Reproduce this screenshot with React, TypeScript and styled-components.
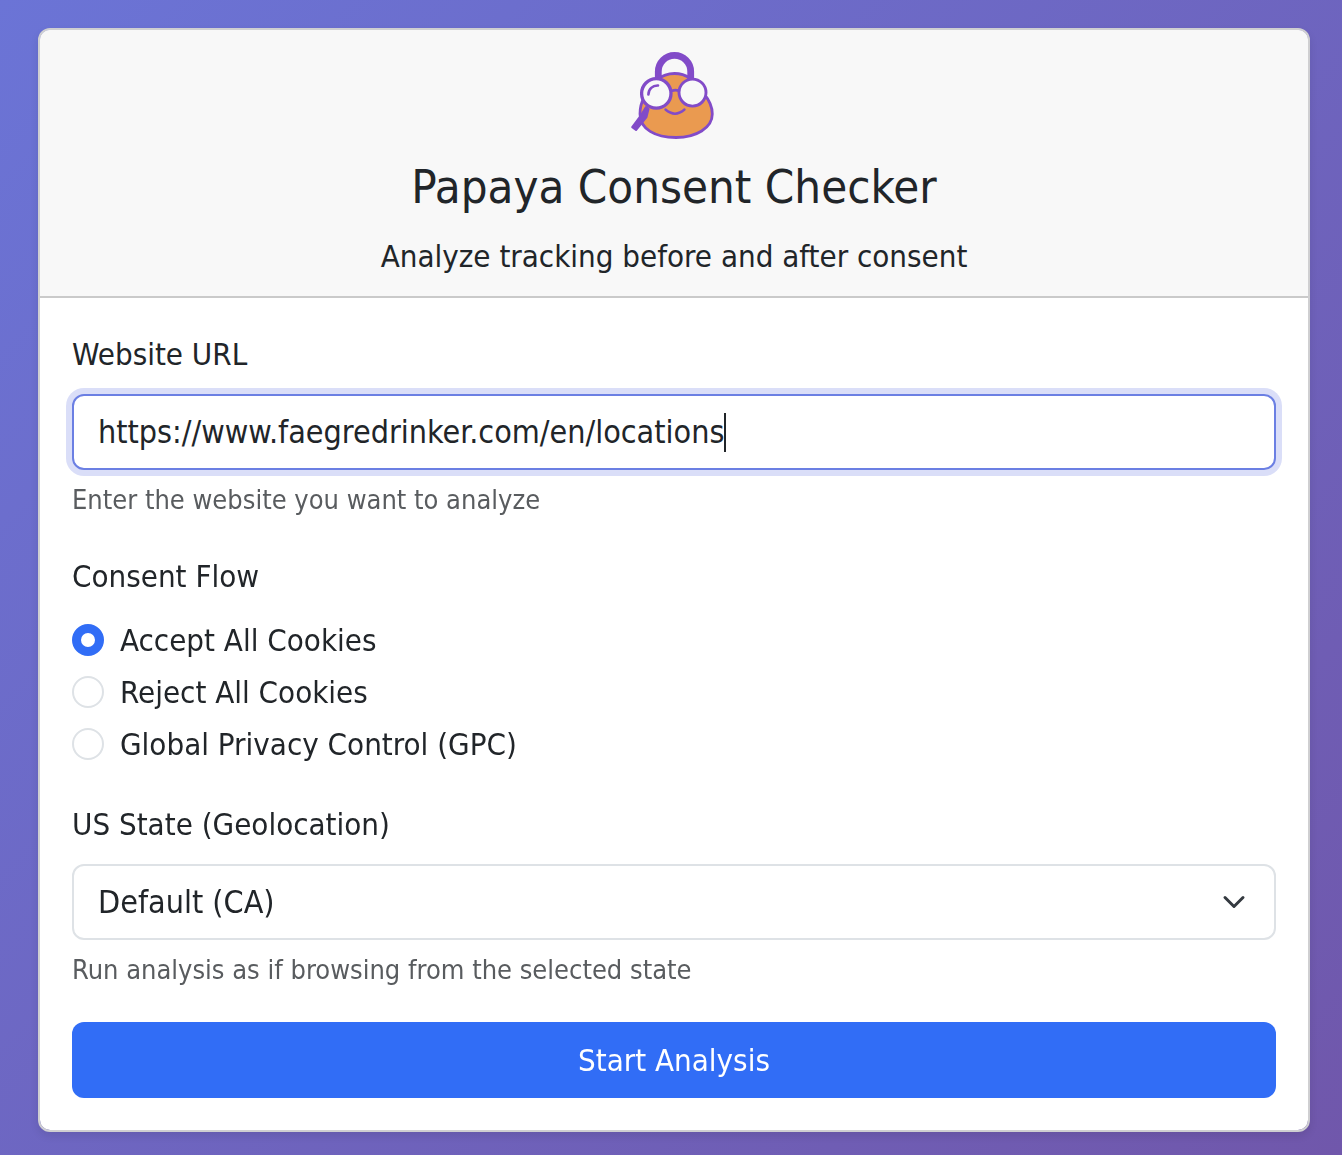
import React, { useState } from 'react';
import styled, { createGlobalStyle } from 'styled-components';

const GlobalStyle = createGlobalStyle`
  *, *::before, *::after { box-sizing: border-box; }
  body {
    margin: 0;
    color: #212529;
    background: #6d65c2;
    font-family: Tahoma, 'DejaVu Sans Condensed', 'Noto Sans', sans-serif;
    font-size: 31px;
    line-height: 48px;
  }
  button, input, select { font: inherit; color: inherit; margin: 0; }
`;

const Page = styled.main`
  min-height: 100vh;
  padding: 28px 32px 23px 38px;
  background: linear-gradient(135deg, #6b74d6 0%, #7057ab 100%);
`;

const Card = styled.section`
  border: 2px solid #cfcfd1;
  border-radius: 12px;
  background: #fff;
  background-clip: padding-box;
  box-shadow: 0 4px 8px rgba(0, 0, 0, 0.09);
  overflow: hidden;
`;

const Header = styled.header`
  display: flex;
  flex-direction: column;
  align-items: center;
  gap: 16px;
  padding: 16px 32px;
  text-align: center;
  background: #f8f8f8;
  border-bottom: 2px solid #cacaca;
`;

const Title = styled.h1`
  margin: 0;
  font-size: 47px;
  font-weight: 400;
  line-height: 58px;
`;

const Subtitle = styled.p`
  margin: 0;
`;

const Form = styled.form`
  display: flex;
  flex-direction: column;
  gap: 32px;
  padding: 32px;
`;

const Field = styled.div`
  display: flex;
  flex-direction: column;
`;

const Group = styled.fieldset`
  display: flex;
  flex-direction: column;
  gap: 4px;
  min-width: 0;
  margin: 0;
  padding: 0;
  border: 0;
`;

const Label = styled.label`
  margin-bottom: 16px;
`;

const Legend = styled.legend`
  padding: 0;
  margin-bottom: 16px;
`;

const Hint = styled.small`
  margin-top: 10px;
  color: #595c5f;
  font-size: 27px;
  line-height: 40px;
`;

const InputShell = styled.label`
  display: flex;
  align-items: center;
  height: 76px;
  padding: 0 24px;
  border: 2px solid #6b7fe3;
  border-radius: 12px;
  background: #fff;
  box-shadow: 0 0 0 6px #dadef8;
  cursor: text;
`;

const UrlInput = styled.input`
  field-sizing: content;
  max-width: 100%;
  height: 48px;
  padding: 0;
  border: 0;
  outline: 0;
  background: transparent;
  caret-color: transparent;
  font-size: 32px;
`;

const Caret = styled.span`
  width: 2px;
  height: 39px;
  background: #212529;
`;

const RadioRow = styled.label`
  display: flex;
  align-items: center;
  gap: 16px;
`;

const Radio = styled.input`
  appearance: none;
  flex: none;
  width: 32px;
  height: 32px;
  border: 2px solid #dee2e6;
  border-radius: 50%;
  background: #fff;

  &:checked {
    border: 9px solid #316df6;
  }
`;

const SelectShell = styled.div`
  display: grid;
  align-items: center;

  & > * { grid-area: 1 / 1; }
  svg {
    justify-self: end;
    margin-right: 26px;
    pointer-events: none;
  }
`;

const Select = styled.select`
  appearance: none;
  width: 100%;
  height: 76px;
  padding: 0 72px 0 24px;
  border: 2px solid #dee2e6;
  border-radius: 12px;
  background: #fff;
  font-size: 32px;
`;

const Submit = styled.button`
  height: 76px;
  border: 0;
  border-radius: 12px;
  color: #fff;
  background: #316df6;
  cursor: pointer;
`;

const Logo = () => (
  <svg width="96" height="96" viewBox="0 0 96 96" fill="none" stroke="#824bc8" strokeLinecap="round" aria-hidden="true">
    <path d="M48.500 27.500C60 27.500 68 33 78 48C84 55 86.300 61 86.300 68C86.300 82 70 91.500 50 91.500C29 91.500 14 83 14 68C14 62 15 57 18 52C24 36 36 27.500 48.500 27.500Z" fill="#ea9a50" strokeWidth="2.800" />
    <path d="M32.300 38V25.600a16.200 16.200 0 0 1 32.400 0V37" strokeWidth="6.800" strokeLinecap="butt" />
    <path d="M14.800 69.500L6.200 81.200L10 84L20.500 71L22.500 63L20 61Z" fill="#824bc8" strokeWidth="2" strokeLinejoin="round" />
    <circle cx="30.300" cy="47.400" r="14.700" fill="#f8f8f8" strokeWidth="3.300" />
    <circle cx="66.500" cy="46.600" r="13.500" fill="#f8f8f8" strokeWidth="2.900" />
    <path d="M46 44.700Q49.500 43.500 53 44.700" strokeWidth="2.600" />
    <path d="M39.500 63.500Q49 71.800 58.500 63.500" strokeWidth="2.400" />
    <path d="M22.400 48.500C22.600 43 26.500 39.300 32 39.500" strokeWidth="2.600" />
  </svg>
);

const Chevron = () => (
  <svg width="32" height="24" viewBox="0 0 32 24" fill="none" aria-hidden="true">
    <path d="M7 7.500l9 9 9-9" stroke="#343a40" strokeWidth="3" strokeLinecap="round" strokeLinejoin="round" />
  </svg>
);

const FLOWS = [
  { id: 'accept', label: 'Accept All Cookies' },
  { id: 'reject', label: 'Reject All Cookies' },
  { id: 'gpc', label: 'Global Privacy Control (GPC)' },
];

export default function App() {
  const [url, setUrl] = useState('https://www.faegredrinker.com/en/locations');
  const [flow, setFlow] = useState('accept');

  return (
    <>
      <GlobalStyle />
      <Page>
        <Card>
          <Header>
            <Logo />
            <Title>Papaya Consent Checker</Title>
            <Subtitle>Analyze tracking before and after consent</Subtitle>
          </Header>
          <Form onSubmit={(e) => e.preventDefault()}>
            <Field>
              <Label htmlFor="url">Website URL</Label>
              <InputShell htmlFor="url">
                <UrlInput id="url" value={url} onChange={(e) => setUrl(e.target.value)} autoFocus />
                <Caret />
              </InputShell>
              <Hint>Enter the website you want to analyze</Hint>
            </Field>
            <Group>
              <Legend>Consent Flow</Legend>
              {FLOWS.map((f) => (
                <RadioRow key={f.id} htmlFor={f.id}>
                  <Radio type="radio" name="flow" id={f.id} checked={flow === f.id} onChange={() => setFlow(f.id)} />
                  {f.label}
                </RadioRow>
              ))}
            </Group>
            <Field>
              <Label htmlFor="state">US State (Geolocation)</Label>
              <SelectShell>
                <Select id="state" defaultValue="default">
                  <option value="default">Default (CA)</option>
                </Select>
                <Chevron />
              </SelectShell>
              <Hint>Run analysis as if browsing from the selected state</Hint>
            </Field>
            <Submit type="submit">Start Analysis</Submit>
          </Form>
        </Card>
      </Page>
    </>
  );
}
